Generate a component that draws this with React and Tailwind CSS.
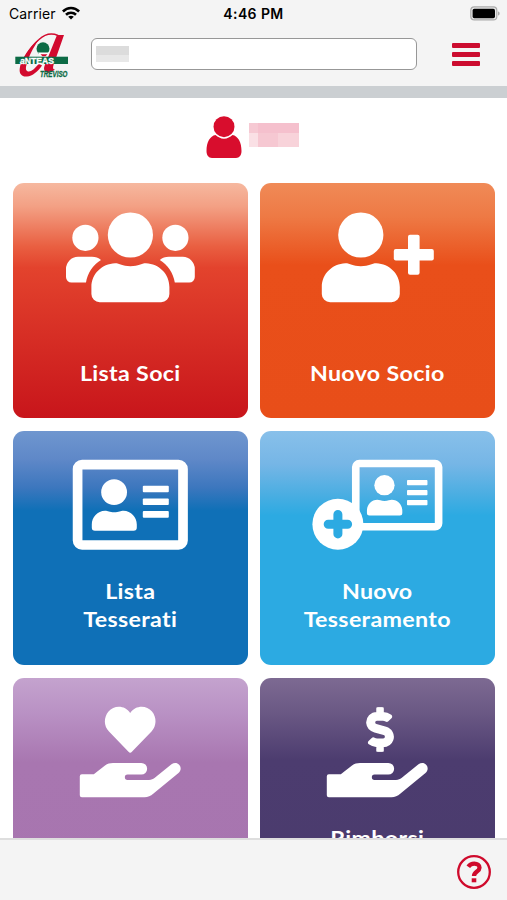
import React from 'react';
import { FaDollarSign } from 'react-icons/fa';

const Bust = () => (
    <>
        <circle cx="117.4" cy="52" r="22.6" />
        <path d="M102 80.3C107 80.3 109 83.2 117.4 83.2C126 83.2 128 80.3 133 80.3C146 80.8 156.4 91 156.4 104V111a8.3 8.3 0 0 1-8.3 8.3H86.7a8.3 8.3 0 0 1-8.3-8.3V104C78.4 91 89 80.8 102 80.3Z" />
    </>
);

const SideMember = () => (
    <>
        <circle cx="72.4" cy="54.8" r="13.1" />
        <path d="M65 73.8H79C82.5 73.8 85.5 75 88 77C80 82 74.5 90 73 99.6H58.5a5.5 5.5 0 0 1-5.5-5.5V86A12 12 0 0 1 65 73.8Z" />
    </>
);

const Card = () => (
    <>
        <rect x="64.6" y="33.6" width="105.4" height="80.4" rx="4.5" fill="none" stroke="currentColor" strokeWidth="9.7" />
        <circle cx="101.1" cy="61.2" r="12.9" />
        <path d="M92 79.8C95 79.8 96.5 81.3 101.2 81.3C106 81.3 107.5 79.8 110.5 79.8C118 80 123.8 86.1 123.8 93.6V96.6a3.2 3.2 0 0 1-3.2 3.2H82a3.2 3.2 0 0 1-3.2-3.2V93.6C78.8 86.1 84.5 80 92 79.8Z" />
        <rect x="129.8" y="54.7" width="26" height="6.6" rx="1" />
        <rect x="129.8" y="67.4" width="26" height="6.6" rx="1" />
        <rect x="129.8" y="80.1" width="26" height="6.6" rx="1" />
    </>
);

const Hand = () => (
    <path d="M68.8 96.3H80.8L92 87.500C94.500 85.500 97 84.900 100 84.900H128.300a5.850 5.850 0 0 1 0 11.700H114.500a2.650 2.650 0 0 0 0 5.300H136C138.500 101.900 140 101.300 141.500 100.100L158.500 86.300C165 82 171 90 165.500 95L140.500 115.500C137.500 118.100 135 119.200 131.500 119.200H68.800a2 2 0 0 1-2-2V98.300a2 2 0 0 1 2-2Z" />
);

const tiles = [
    {
        id: 'soci',
        lines: ['Lista Soci'],
        bg: 'bg-[linear-gradient(180deg,#f6b89f_0%,#f3a084_10%,#e95f41_27%,#e3432d_36%,#c8151b_100%)]',
        icon: (
            <>
                <Bust />
                <SideMember />
                <g transform="translate(234.8 0) scale(-1 1)"><SideMember /></g>
            </>
        ),
    },
    {
        id: 'nuovo-socio',
        lines: ['Nuovo Socio'],
        bg: 'bg-[linear-gradient(180deg,#f08a57_0%,#ee7a45_14%,#e94f1a_35%,#e84e19_100%)]',
        icon: (
            <>
                <g transform="translate(-16.6 0)"><Bust /></g>
                <rect x="133.8" y="65.9" width="40" height="11.6" rx="2" />
                <rect x="148" y="51.7" width="11.6" height="40" rx="2" />
            </>
        ),
    },
    {
        id: 'tesserati',
        lines: ['Lista', 'Tesserati'],
        bg: 'bg-[linear-gradient(180deg,#6f96cf_0%,#5f88c8_12%,#3d77be_24%,#0f70b7_34%,#0f70b7_100%)]',
        icon: <Card />,
    },
    {
        id: 'tesseramento',
        lines: ['Nuovo', 'Tesseramento'],
        bg: 'bg-[linear-gradient(180deg,#88c0ea_0%,#76b6e6_14%,#4baee2_27%,#2caae2_36%,#2caae2_100%)]',
        icon: (
            <>
                <g transform="translate(92 29) scale(0.786) translate(-59.8 -29.1)"><Card /></g>
                <circle cx="77.9" cy="93.2" r="25.5" />
                <path d="M68.2 93.2H87.6M77.9 83.5V102.9" stroke="#2caae2" strokeWidth="9" strokeLinecap="round" />
            </>
        ),
    },
    {
        id: 'donazioni',
        lines: [],
        bg: 'bg-[linear-gradient(180deg,#c4a3ce_0%,#b991c4_15%,#a876b0_36%,#a775af_100%)]',
        icon: (
            <>
                <path d="M117.2 35C112 27 101 27 95.5 33.5C90.5 39.5 90.7 48 96 53.5L115.500 73.700a2.300 2.300 0 0 0 3.400 0L138.500 53.500C143.700 48 143.900 39.500 139 33.500C133.500 27 122.500 27 117.200 35Z" />
                <Hand />
            </>
        ),
    },
    {
        id: 'rimborsi',
        lines: ['Rimborsi'],
        bg: 'bg-[linear-gradient(180deg,#7d6a92_0%,#6a5884_15%,#4c3c6f_35%,#4a3b6d_100%)]',
        icon: (
            <>
                <g transform="translate(97 29.3) scale(0.09 0.087)">
                    <FaDollarSign size={512} stroke="currentColor" strokeWidth="20" />
                </g>
                <Hand />
            </>
        ),
    },
];

function Logo() {
    return (
        <svg viewBox="0 0 56 48" className="w-14 h-12 overflow-visible">
            <path d="M44 3.500C38 1 31 2 25 7.500C16 15 9 28 7 35" fill="none" stroke="#d20a2e" strokeWidth="1.500" />
            <path d="M25 7.500C15 15 7.500 27 5.800 36C4.800 42 8 45 13 44.500C18.500 44 24 39.500 28 33.500L25 31.500C21 36.500 17.500 39.500 15 39.500C12 39.500 11.500 37 12.200 34C14 26 19 15.500 25 7.500Z" fill="#d20a2e" />
            <path d="M43 3H50L39.500 33C38.500 36 39 37.500 41 37.500L38 39.500C33 42.500 28.500 39.500 30.500 34Z" fill="#d20a2e" />
            <circle cx="29" cy="16.800" r="6.500" fill="#0c6b45" />
            <path d="M24 20.500H35.500L33.500 24.700H26Z" fill="#fff" />
            <path d="M26.500 22.300H33.500L31.500 24.300H28.500Z" fill="#d20a2e" />
            <rect x="1.300" y="24.700" width="52.700" height="7.300" fill="#0c6b45" />
            <text x="6" y="31.500" fill="#fff" stroke="#fff" strokeWidth="0.300" fontSize="8.800" fontWeight="700" textLength="34" lengthAdjust="spacingAndGlyphs" className="font-['Liberation_Sans',sans-serif]"><tspan fontStyle="italic">a</tspan>NTEAS</text>
            <text x="26" y="45.200" fill="#0c6b45" stroke="#0c6b45" strokeWidth="0.300" fontSize="9" fontWeight="700" fontStyle="italic" textLength="27.500" lengthAdjust="spacingAndGlyphs" className="font-['Liberation_Sans',sans-serif]">TREVISO</text>
        </svg>
    );
}

function StatusBar() {
    return (
        <div className="grid grid-cols-3 items-center h-7 pl-[9px] pr-[7px] text-black text-[14px] leading-none">
            <div className="flex items-center gap-[7px]">
                <span className="tracking-[0.1px]">Carrier</span>
                <svg viewBox="0 0 18 14" className="w-[18px] h-[14px] -mt-0.5 -ml-px" fill="none" stroke="#000" strokeWidth="2.600">
                    <path d="M0.900 5.500C5.500 0.900 12.500 0.900 17.100 5.500" />
                    <path d="M4 8.700C6.800 6 11.200 6 14 8.700" />
                    <path d="M9 13.500L6.200 10.700C7.800 9.300 10.200 9.300 11.800 10.700Z" fill="#000" stroke="none" />
                </svg>
            </div>
            <span className="text-center font-semibold tracking-[0.4px] -ml-0.5">4:46 PM</span>
            <svg viewBox="0 0 30 15" className="w-[30px] h-[15px] justify-self-end -mt-0.5">
                <rect x="0.800" y="0.900" width="26" height="13" rx="3.500" fill="#e8e8e8" stroke="#aaa" strokeWidth="1.200" />
                <rect x="2.600" y="2.700" width="22.400" height="9.500" rx="1.700" fill="#000" />
                <path d="M28 5.500C30.200 6 30.200 9 28 9.500Z" fill="#aaa" />
            </svg>
        </div>
    );
}

export default function App() {
    return (
        <div className="w-[507px] h-[900px] flex flex-col overflow-hidden bg-white font-['Inter',sans-serif]">
            {/* Header */}
            <header className="h-[98px] shrink-0 bg-[#f4f4f4] border-b-[12px] border-[#cbcfd2]">
                <StatusBar />
                <div className="flex items-center pl-[14px] pr-[27px] pt-[4px]">
                    <Logo />
                    <div className="ml-[21px] -mt-[5px] w-[326px] h-8 bg-white border-[1.5px] border-[#979797] rounded-md px-1 pt-[7px]">
                        <div className="w-[33px] h-[9px] bg-[#dcdcdc]"></div>
                        <div className="w-[33px] h-[7px] bg-[#e8e8e8]"></div>
                    </div>
                    <button className="ml-auto -mt-[3px] flex flex-col gap-[4px]" aria-label="Menu">
                        <span className="w-7 h-[5px] bg-[#cc0c2f] rounded-[1px]"></span>
                        <span className="w-7 h-[5px] bg-[#cc0c2f] rounded-[1px]"></span>
                        <span className="w-7 h-[5px] bg-[#cc0c2f] rounded-[1px]"></span>
                    </button>
                </div>
            </header>

            <main className="flex-1 min-h-0 overflow-hidden">
                {/* Current user */}
                <div className="h-[85.2px] flex pl-[206px] pt-[18px] gap-[7px]">
                    <svg viewBox="0 0 36 42" className="w-9 h-[42px] text-[#d80d2d]" fill="currentColor">
                        <circle cx="18" cy="10.700" r="10.500" />
                        <path d="M9.500 19C12 21 14.500 22.700 18 22.700S24 21 26.500 19C32 20 35.500 26 35.500 35C35.500 39 33.500 42 30 42H6C2.500 42 0.500 39 0.500 35C0.500 26 4 20 9.500 19Z" />
                    </svg>
                    <div className="mt-[7px] grid grid-cols-[9px_20px_21px] grid-rows-[10px_14px] h-6">
                        <div className="bg-[#f6c9d3]"></div>
                        <div className="bg-[#f5c0cd] col-span-2"></div>
                        <div className="bg-[#fae0e5]"></div>
                        <div className="bg-[#f6c8d2]"></div>
                        <div className="bg-[#f8d3da]"></div>
                    </div>
                </div>

                {/* Menu tiles */}
                <div className="grid grid-cols-[234.5px_234.5px] auto-rows-[234.5px] gap-x-[12.6px] gap-y-[13px] pl-[13.2px]">
                    {tiles.map((tile) => (
                        <button key={tile.id} className={`flex flex-col items-center rounded-[11px] text-white overflow-hidden ${tile.bg}`}>
                            <svg viewBox="0 0 234.5 134" className="w-full h-[134px] shrink-0" fill="currentColor">
                                {tile.icon}
                            </svg>
                            <span className={`flex-1 w-full scale-x-[1.08] font-['Lato',sans-serif] font-bold text-[21.5px] leading-[28px] tracking-[0.3px] ${tile.lines[0]?.includes(' ') ? 'pt-[41.5px]' : 'pt-[12px]'}`}>
                                {tile.lines.map((line) => (
                                    <span key={line} className="block">{line}</span>
                                ))}
                            </span>
                        </button>
                    ))}
                </div>
            </main>

            {/* Footer */}
            <footer className="h-[62px] shrink-0 bg-[#f4f4f4] border-t-2 border-[#dedede] flex items-center justify-end pr-4">
                <svg viewBox="0 0 34 34" className="w-[34px] h-[34px] mt-1 text-[#cf0a2c]" fill="none" stroke="currentColor">
                    <circle cx="17" cy="17" r="15.800" strokeWidth="2.300" />
                    <path d="M11.300 11.800C13 9.300 15 8.600 17.300 8.600C20.300 8.600 22.500 10.200 22.500 12.700C22.500 16.500 17 16.500 17 21" strokeWidth="4.300" />
                    <path d="M14.700 25.300H19.300" strokeWidth="4" />
                </svg>
            </footer>
        </div>
    );
}
